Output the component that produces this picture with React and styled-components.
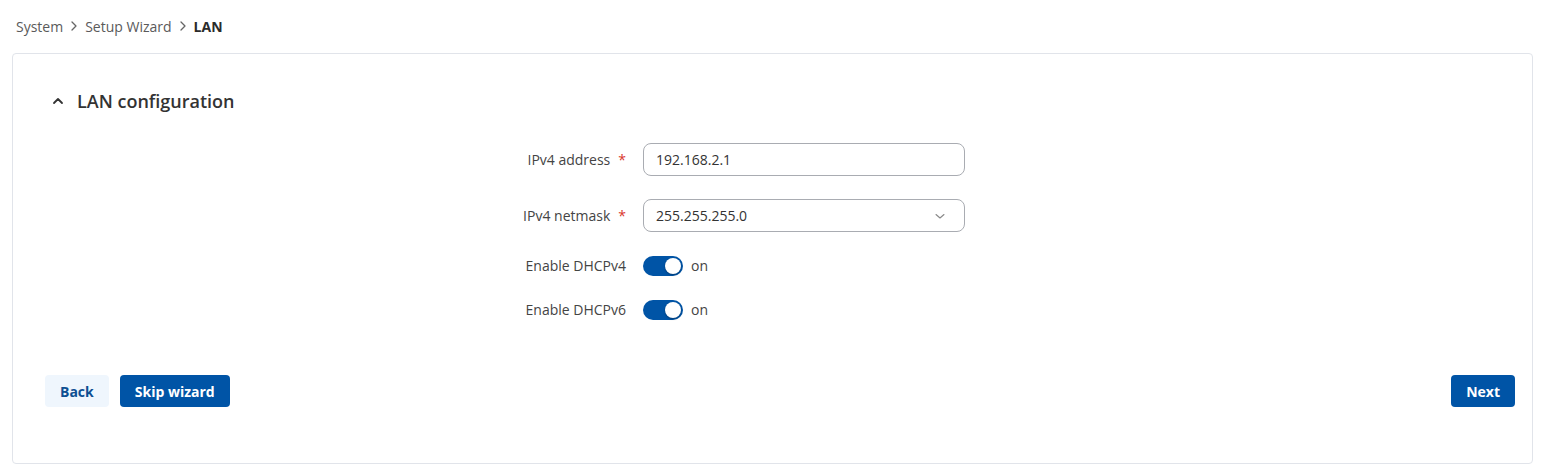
import styled, { createGlobalStyle } from "styled-components";

const Global = createGlobalStyle`
  body {
    margin: 0;
    background: #fff;
    font-family: "Open Sans", "Noto Sans", sans-serif;
    color: #404040;
  }
`;

const Page = styled.div`
  padding: 16px 20px 8px 12px;
`;

const Crumbs = styled.div`
  display: flex;
  align-items: center;
  height: 20px;
  padding-left: 4px;
  margin-bottom: 17px;
  font-size: 14px;
  color: #555;
`;

const Crumb = styled.span`
  color: ${(p) => (p.active ? "#2b2b2b" : "#5a5a5a")};
  font-weight: ${(p) => (p.active ? 700 : 400)};
`;

const Sep = styled.span`
  display: inline-flex;
  margin: 0 5px;
  color: #666;
`;

const Card = styled.div`
  border: 1px solid #e1e4ea;
  border-radius: 4px;
  padding: 31px 17px 56px 32px;
  height: 411px;
  box-sizing: border-box;
`;

const Header = styled.div`
  display: flex;
  align-items: center;
  height: 32px;
  padding-left: 7px;
  gap: 13px;
  font-size: 18px;
  font-weight: 600;
  color: #333;
`;

const Form = styled.div`
  display: flex;
  flex-direction: column;
  gap: 23px;
  margin-top: 26px;
`;

const Row = styled.div`
  display: grid;
  grid-template-columns: 40% 322px;
  column-gap: 10px;
  align-items: center;
  height: ${(p) => (p.short ? "21px" : "33px")};
`;

const Label = styled.label`
  text-align: right;
  padding-right: 7px;
  font-size: 14px;
  color: #444;
`;

const Star = styled.span`
  color: #d9362b;
  margin-left: 8px;
`;

const Field = styled.div`
  display: flex;
  align-items: center;
  justify-content: space-between;
  height: 33px;
  box-sizing: border-box;
  border: 1px solid #a9acb2;
  border-radius: 8px;
  padding: 0 18px 0 12px;
  font-size: 14px;
  color: #333;
`;

const ToggleWrap = styled.div`
  display: flex;
  align-items: center;
  gap: 8px;
  font-size: 14px;
  color: #444;
`;

const Track = styled.span`
  position: relative;
  width: 40px;
  height: 20px;
  border-radius: 10px;
  background: #0054a6;
  display: inline-block;
`;

const Knob = styled.span`
  position: absolute;
  top: 2px;
  right: 2px;
  width: 16px;
  height: 16px;
  border-radius: 50%;
  background: #fff;
  box-shadow: 0 1px 2px rgba(0, 0, 0, 0.3);
`;

const Actions = styled.div`
  display: flex;
  align-items: center;
  gap: 11px;
  margin-top: 55px;
`;

const Button = styled.button`
  height: 32px;
  padding: 0 15px;
  border: none;
  border-radius: 4px;
  font-family: inherit;
  font-size: 14px;
  font-weight: 700;
  background: ${(p) => (p.light ? "#eff6fd" : "#0054a6")};
  color: ${(p) => (p.light ? "#0d4f92" : "#fff")};
  ${(p) => (p.push ? "margin-left: auto;" : "")}
`;

const Chevron = ({ dir = "right", size = 12, color = "#666", w = 1.3 }) => {
  const d = {
    right: "M4 2 L8 6 L4 10",
    up: "M2 8 L6 4 L10 8",
    down: "M2 4.5 L6 8 L10 4.5",
  }[dir];
  return (
    <svg width={size} height={size} viewBox="0 0 12 12">
      <path d={d} fill="none" stroke={color} strokeWidth={w} strokeLinecap="round" strokeLinejoin="round" />
    </svg>
  );
};

const Toggle = ({ label }) => (
  <Row short>
    <Label>{label}</Label>
    <ToggleWrap>
      <Track>
        <Knob />
      </Track>
      on
    </ToggleWrap>
  </Row>
);

export default function App() {
  return (
    <Page>
      <Global />
      <Crumbs>
        <Crumb>System</Crumb>
        <Sep><Chevron /></Sep>
        <Crumb>Setup Wizard</Crumb>
        <Sep><Chevron /></Sep>
        <Crumb active>LAN</Crumb>
      </Crumbs>
      <Card>
        <Header>
          <Chevron dir="up" size={12} color="#333" w={1.8} />
          LAN configuration
        </Header>
        <Form>
          <Row>
            <Label>IPv4 address<Star>*</Star></Label>
            <Field>192.168.2.1</Field>
          </Row>
          <Row>
            <Label>IPv4 netmask<Star>*</Star></Label>
            <Field>
              255.255.255.0
              <Chevron dir="down" size={12} color="#888" w={1.1} />
            </Field>
          </Row>
          <Toggle label="Enable DHCPv4" />
          <Toggle label="Enable DHCPv6" />
        </Form>
        <Actions>
          <Button light>Back</Button>
          <Button>Skip wizard</Button>
          <Button push>Next</Button>
        </Actions>
      </Card>
    </Page>
  );
}
